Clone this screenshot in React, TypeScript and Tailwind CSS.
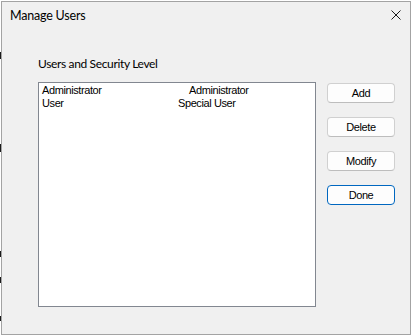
import React from "react";

type Row = { name: string; level: string; col: string };

const rows: Row[] = [
  { name: "Administrator", level: "Administrator", col: "w-[147px]" },
  { name: "User", level: "Special User", col: "w-[136px]" },
];

const actions = ["Add", "Delete", "Modify", "Done"];

// bits of whatever sits behind the dialog, visible in the 1px column on the left
const behind = [
  { top: "top-[52px]", h: "h-[7px]" },
  { top: "top-[144px]", h: "h-[8px]" },
  { top: "top-[251px]", h: "h-[6px]" },
  { top: "top-[277px]", h: "h-[6px]" },
  { top: "top-[316px]", h: "h-[5px]" },
];

export default function App() {
  return (
    <div className="w-[412px] h-[335px] bg-white flex overflow-hidden">
      <div className="relative w-px shrink-0">
        {behind.map((b, i) => (
          <div key={i} className={`absolute left-0 w-px bg-[#1a1a1a] ${b.top} ${b.h}`} />
        ))}
      </div>

      <div className="mt-px w-[410px] h-[334px] shrink-0 border border-[#a3a3a3] bg-[#f0f0f0] flex flex-col">
        {/* title bar */}
        <div className="flex items-start justify-between pt-[6px] pl-[8px] pr-[9px]">
          <span className="text-[12.5px] leading-[16px] tracking-[-0.2px] text-black font-['Lato',sans-serif]">
            Manage Users
          </span>
          <svg width="10" height="10" viewBox="0 0 10 10" className="mt-[2px]">
            <path d="M0.5 0.5 L9.5 9.5 M9.5 0.5 L0.5 9.5" stroke="#1a1a1a" strokeWidth="1" fill="none" />
          </svg>
        </div>

        <div className="pl-[36px]">
          <div className="mt-[32px] text-[12px] leading-[16px] tracking-[-0.35px] text-black font-['Lato',sans-serif]">
            Users and Security Level
          </div>

          <div className="mt-[10px] flex items-start">
            <div className="w-[278px] h-[225px] border border-[#828790] bg-white pt-px pl-[3px] font-['Liberation_Sans',Arial,sans-serif] text-[11px] leading-[13px] tracking-[-0.4px] text-black">
              {rows.map((r) => (
                <div key={r.name} className="flex whitespace-nowrap">
                  <span className={`shrink-0 ${r.col}`}>{r.name}</span>
                  <span>{r.level}</span>
                </div>
              ))}
            </div>

            <div className="ml-[11px] mt-px flex flex-col gap-[14px]">
              {actions.map((a) => (
                <button
                  key={a}
                  className={`w-[68px] h-[20px] rounded-[4px] bg-[#fdfdfd] border font-['Liberation_Sans',Arial,sans-serif] text-[11px] leading-[13px] tracking-[-0.4px] text-black ${
                    a === "Done" ? "border-[#0067c0]" : "border-[#d0d0d0] border-b-[#bdbdbd]"
                  }`}
                >
                  {a}
                </button>
              ))}
            </div>
          </div>
        </div>
      </div>
    </div>
  );
}
